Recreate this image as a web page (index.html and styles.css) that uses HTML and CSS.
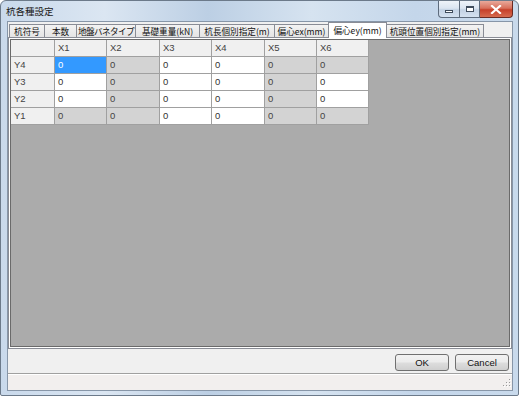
FILE: index.html
```html
<!DOCTYPE html>
<html lang="ja">
<head>
<meta charset="utf-8">
<title>杭各種設定</title>
<link rel="stylesheet" href="styles.css">
</head>
<body>
<div class="window">
  <div class="titlebar">
    <span class="title">杭各種設定</span>
    <div class="caption-buttons">
      <div class="cbtn min"><span class="min-glyph"></span></div>
      <div class="cbtn max"><span class="max-glyph"></span></div>
      <div class="cbtn close"><svg width="12" height="9" viewBox="0 0 12 9"><path d="M2 1 L10 8 M10 1 L2 8" stroke="#ffffff" stroke-width="2.2" stroke-linecap="square"/></svg></div>
    </div>
  </div>
  <div class="client">
    <div class="tabs">
      <div class="tab t1">杭符号</div>
      <div class="tab t2">本数</div>
      <div class="tab t3">地盤バネタイプ</div>
      <div class="tab t4">基礎重量(kN)</div>
      <div class="tab t5">杭長個別指定(m)</div>
      <div class="tab t6">偏心ex(mm)</div>
      <div class="tab t7 active">偏心ey(mm)</div>
      <div class="tab t8">杭頭位置個別指定(mm)</div>
    </div>
    <div class="panel">
      <div class="gridarea">
        <div class="grid">
          <div class="c hd"></div>
          <div class="c hd">X1</div>
          <div class="c hd">X2</div>
          <div class="c hd">X3</div>
          <div class="c hd">X4</div>
          <div class="c hd">X5</div>
          <div class="c hd">X6</div>

          <div class="c hd">Y4</div>
          <div class="c sel">0</div>
          <div class="c g">0</div>
          <div class="c">0</div>
          <div class="c">0</div>
          <div class="c g">0</div>
          <div class="c g">0</div>

          <div class="c hd">Y3</div>
          <div class="c">0</div>
          <div class="c g">0</div>
          <div class="c">0</div>
          <div class="c">0</div>
          <div class="c g">0</div>
          <div class="c">0</div>

          <div class="c hd">Y2</div>
          <div class="c">0</div>
          <div class="c g">0</div>
          <div class="c">0</div>
          <div class="c">0</div>
          <div class="c g">0</div>
          <div class="c">0</div>

          <div class="c hd">Y1</div>
          <div class="c g">0</div>
          <div class="c g">0</div>
          <div class="c">0</div>
          <div class="c">0</div>
          <div class="c g">0</div>
          <div class="c g">0</div>
        </div>
      </div>
    </div>
    <div class="buttons">
      <div class="btn">OK</div>
      <div class="btn">Cancel</div>
    </div>
    <div class="status">
      <svg class="grip" width="10" height="10" viewBox="0 0 10 10">
        <rect x="8" y="0" width="1" height="1" fill="#9a9a9a"/>
        <rect x="5" y="3" width="1" height="1" fill="#9a9a9a"/>
        <rect x="8" y="3" width="1" height="1" fill="#9a9a9a"/>
        <rect x="2" y="6" width="1" height="1" fill="#9a9a9a"/>
        <rect x="5" y="6" width="1" height="1" fill="#9a9a9a"/>
        <rect x="8" y="6" width="1" height="1" fill="#9a9a9a"/>
        <rect x="9" y="1" width="1" height="1" fill="#ffffff"/>
        <rect x="6" y="4" width="1" height="1" fill="#ffffff"/>
        <rect x="9" y="4" width="1" height="1" fill="#ffffff"/>
        <rect x="3" y="7" width="1" height="1" fill="#ffffff"/>
        <rect x="6" y="7" width="1" height="1" fill="#ffffff"/>
        <rect x="9" y="7" width="1" height="1" fill="#ffffff"/>
      </svg>
    </div>
  </div>
</div>
</body>
</html>
```
FILE: styles.css
```css
* { box-sizing: border-box; }
html, body { margin: 0; padding: 0; }
body {
  width: 519px;
  height: 396px;
  overflow: hidden;
  background: #ffffff;
  font-family: "Noto Sans CJK JP", "Liberation Sans", sans-serif;
  color: #000;
}
.window {
  width: 519px;
  height: 396px;
  border: 1px solid #6c7a8a;
  border-radius: 6px 6px 2px 2px;
  background: linear-gradient(90deg, #c9d9eb 0%, #dbe6f2 20%, #bccfe4 40%, #d6e3f0 60%, #c4d6ea 80%, #c9daec 100%);
  display: flex;
  flex-direction: column;
}
.titlebar {
  height: 20px;
  display: flex;
  align-items: flex-start;
  justify-content: space-between;
  flex: none;
}
.title {
  font-size: 9.5px;
  line-height: 12px;
  margin: 4px 0 0 5px;
  color: #1a1a1a;
}
.caption-buttons {
  display: flex;
  margin-right: 5px;
}
.cbtn {
  height: 17px;
  border: 1px solid #5d6b7c;
  border-top: none;
  display: flex;
  align-items: center;
  justify-content: center;
}
.min {
  width: 22px;
  border-radius: 0 0 0 4px;
  background: linear-gradient(#eef3f9 0%, #dbe5f1 45%, #c3d2e4 55%, #d4e1ef 100%);
}
.max {
  width: 20px;
  border-left: none;
  background: linear-gradient(#eef3f9 0%, #dbe5f1 45%, #c3d2e4 55%, #d4e1ef 100%);
}
.close {
  width: 33px;
  border-left: none;
  border-radius: 0 0 4px 0;
  border-color: #6b2a22;
  background: linear-gradient(#e9a99b 0%, #d8705c 45%, #c6402a 55%, #d66b4f 100%);
}
.min-glyph {
  width: 8px;
  height: 3px;
  margin-top: 5px;
  border: 1px solid #3f4c5c;
  background: #fff;
}
.max-glyph {
  width: 8px;
  height: 6px;
  border: 1px solid #3f4c5c;
  border-top-width: 2px;
  background: #fff;
}
.client {
  flex: 1;
  margin: 0 5px 4px 6px;
  border: 1px solid #8796a8;
  background: #f0f0f0;
  display: flex;
  flex-direction: column;
}
.tabs {
  height: 15px;
  display: flex;
  align-items: flex-end;
  padding-left: 1px;
  position: relative;
  z-index: 1;
  flex: none;
}
.tab {
  height: 13px;
  border: 1px solid #898c95;
  border-bottom: none;
  margin-left: -1px;
  background: linear-gradient(#f3f3f3, #e4e4e4);
  font-size: 8.6px;
  line-height: 13px;
  text-align: center;
  white-space: nowrap;
  overflow: hidden;
  color: #111;
}
.tab:first-child { margin-left: 0; }
.t1 { width: 36px; }
.t2 { width: 33px; }
.t3 { width: 60px; letter-spacing: -0.6px; }
.t4 { width: 65px; }
.t5 { width: 76px; }
.t6 { width: 55px; }
.t7 { width: 59px; }
.t8 { width: 98px; }
.tab.active {
  height: 16px;
  margin-bottom: -1px;
  background: #ffffff;
  position: relative;
  z-index: 2;
  line-height: 14px;
}
.panel {
  height: 312px;
  border: 1px solid #898c95;
  background: #ffffff;
  padding: 1px;
  flex: none;
}
.gridarea {
  height: 100%;
  border: 1px solid #6a6a6a;
  background: #ababab;
}
.grid {
  display: grid;
  grid-template-columns: 44px 52px 53px 52px 53px 52px 52px;
  grid-auto-rows: 17px;
  width: 358px;
}
.c {
  background: #ffffff;
  border-right: 1px solid #a0a0a0;
  border-bottom: 1px solid #a0a0a0;
  font-family: "Liberation Sans", "Noto Sans", sans-serif;
  font-size: 9.5px;
  line-height: 16px;
  padding-left: 3px;
  color: #333;
}
.c.hd { background: #f0f0f0; color: #444; }
.c.g { background: #d3d3d3; color: #444; }
.c.sel { background: #3399ff; color: #ffffff; }
.buttons {
  display: flex;
  justify-content: flex-end;
  gap: 6px;
  padding: 5px 3px 0 0;
  height: 23px;
  flex: none;
}
.btn {
  width: 54px;
  height: 17px;
  border: 1px solid #707070;
  border-radius: 3px;
  background: linear-gradient(#f2f2f2 0%, #ebebeb 48%, #dddddd 52%, #cfcfcf 100%);
  font-family: "Liberation Sans", sans-serif;
  font-size: 9.5px;
  line-height: 15px;
  text-align: center;
  color: #111;
}
.status {
  flex: 1;
  margin-top: 1px;
  border-top: 1px solid #a0a0a0;
  background: #f2efee;
  position: relative;
  box-shadow: inset 0 1px 0 #ffffff;
}
.grip {
  position: absolute;
  right: 1px;
  bottom: 1px;
}
```
